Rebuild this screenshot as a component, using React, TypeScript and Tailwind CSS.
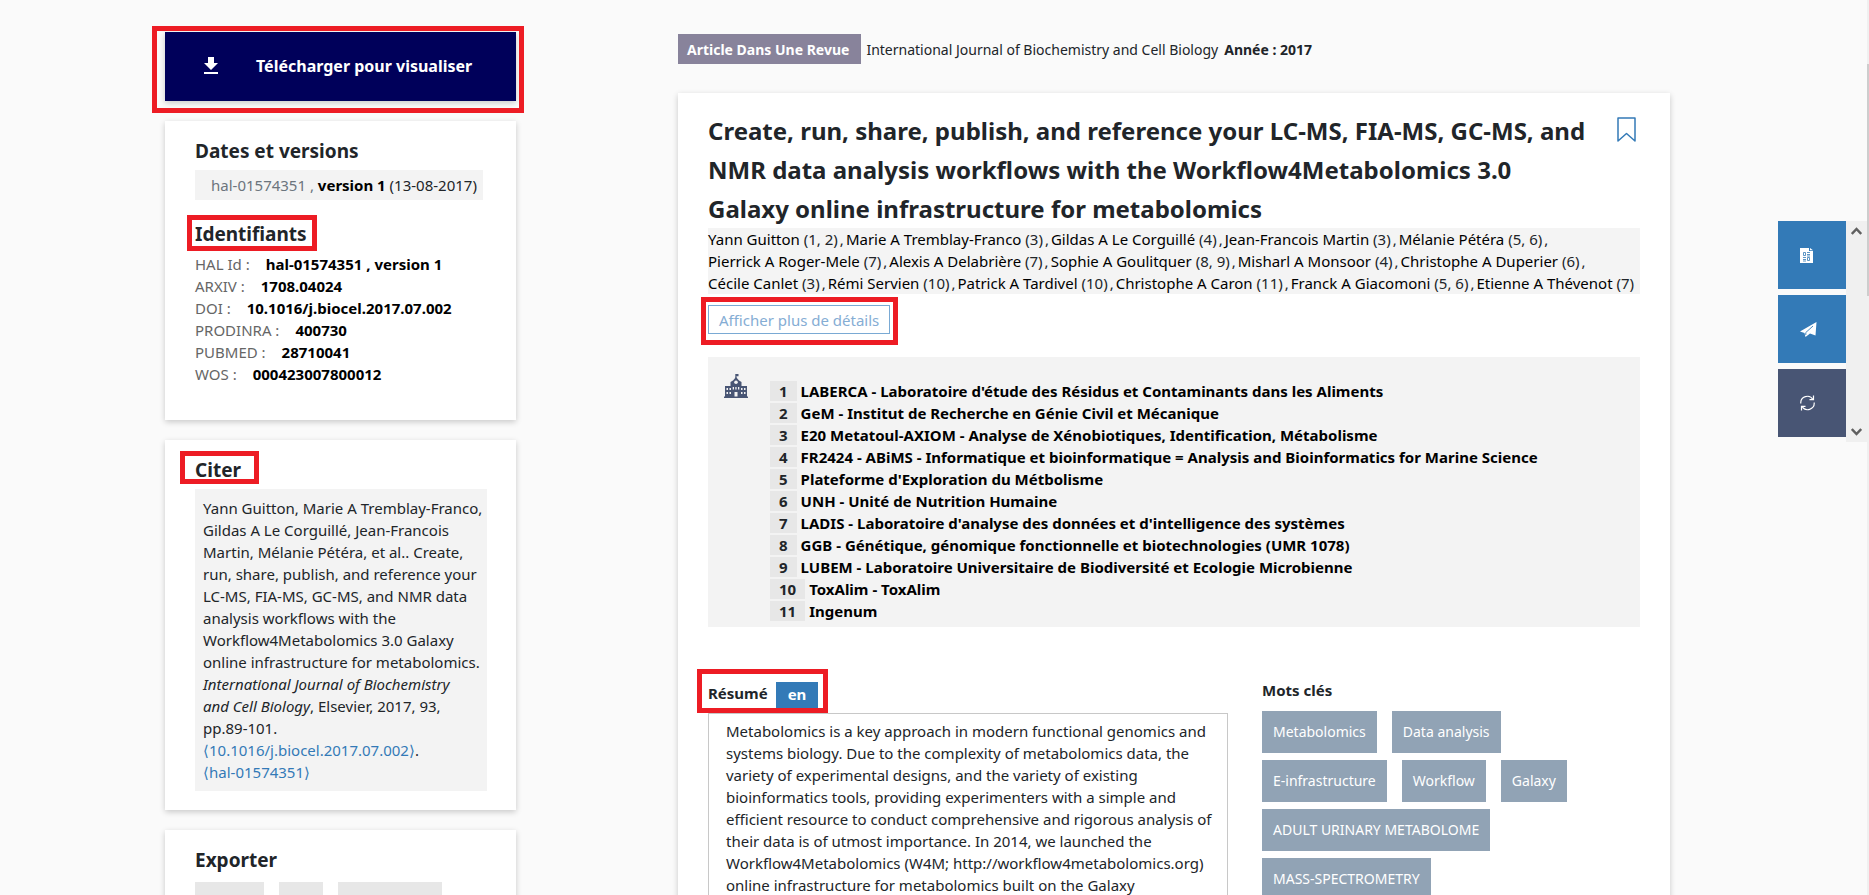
import type { ReactNode } from 'react';
import { MdFileDownload } from 'react-icons/md';

const identifiers = [
  { label: 'HAL Id :', value: 'hal-01574351 , version 1' },
  { label: 'ARXIV :', value: '1708.04024' },
  { label: 'DOI :', value: '10.1016/j.biocel.2017.07.002' },
  { label: 'PRODINRA :', value: '400730' },
  { label: 'PUBMED :', value: '28710041' },
  { label: 'WOS :', value: '000423007800012' },
];

const authors = [
  { name: 'Yann Guitton', refs: '(1, 2)' },
  { name: 'Marie A Tremblay-Franco', refs: '(3)' },
  { name: 'Gildas A Le Corguillé', refs: '(4)' },
  { name: 'Jean-Francois Martin', refs: '(3)' },
  { name: 'Mélanie Pétéra', refs: '(5, 6)' },
  { name: 'Pierrick A Roger-Mele', refs: '(7)' },
  { name: 'Alexis A Delabrière', refs: '(7)' },
  { name: 'Sophie A Goulitquer', refs: '(8, 9)' },
  { name: 'Misharl A Monsoor', refs: '(4)' },
  { name: 'Christophe A Duperier', refs: '(6)' },
  { name: 'Cécile Canlet', refs: '(3)' },
  { name: 'Rémi Servien', refs: '(10)' },
  { name: 'Patrick A Tardivel', refs: '(10)' },
  { name: 'Christophe A Caron', refs: '(11)' },
  { name: 'Franck A Giacomoni', refs: '(5, 6)' },
  { name: 'Etienne A Thévenot', refs: '(7)' },
];

const labs = [
  "LABERCA - Laboratoire d'étude des Résidus et Contaminants dans les Aliments",
  'GeM - Institut de Recherche en Génie Civil et Mécanique',
  'E20 Metatoul-AXIOM - Analyse de Xénobiotiques, Identification, Métabolisme',
  'FR2424 - ABiMS - Informatique et bioinformatique = Analysis and Bioinformatics for Marine Science',
  "Plateforme d'Exploration du Métbolisme",
  'UNH - Unité de Nutrition Humaine',
  "LADIS - Laboratoire d'analyse des données et d'intelligence des systèmes",
  'GGB - Génétique, génomique fonctionnelle et biotechnologies (UMR 1078)',
  'LUBEM - Laboratoire Universitaire de Biodiversité et Ecologie Microbienne',
  'ToxAlim - ToxAlim',
  'Ingenum',
];

const keywords = [
  'Metabolomics',
  'Data analysis',
  'E-infrastructure',
  'Workflow',
  'Galaxy',
  'ADULT URINARY METABOLOME',
  'MASS-SPECTROMETRY',
];

// Red frame drawn over its relative parent
function Highlight({ className }: { className: string }) {
  return <div className={`absolute border-5 border-[#ed1c24] pointer-events-none ${className}`} />;
}

function Card({ children, className = '' }: { children: ReactNode; className?: string }) {
  return (
    <section className={`bg-white px-[30px] shadow-[0_2px_6px_rgba(0,0,0,0.2)] ${className}`}>
      {children}
    </section>
  );
}

function Heading({ children }: { children: ReactNode }) {
  return <h2 className="text-[19px] leading-[30px] font-bold">{children}</h2>;
}

function Sidebar() {
  return (
    <aside className="w-[351px] shrink-0 flex flex-col gap-5 pt-8">
      <div className="relative">
        <button className="w-full h-[69px] pb-0.5 bg-[#00005a] text-white font-bold text-base flex items-center shadow-[0_2px_6px_rgba(0,0,0,0.2)]">
          <MdFileDownload size={24} className="ml-[34px] mr-[33px]" />
          <span>Télécharger pour visualiser</span>
        </button>
        <Highlight className="-left-[13px] -right-2 -top-1.5 -bottom-3" />
      </div>

      <Card className="pt-[15px] pb-[35px]">
        <Heading>Dates et versions</Heading>
        <p className="w-72 mt-1 pl-4 bg-[#f3f3f3] leading-[30px] whitespace-nowrap">
          <span className="text-[#6c757d]">hal-01574351 ,</span>{' '}
          <b className="text-black">version 1</b> (13-08-2017)
        </p>
        <div className="relative w-fit mt-[19px]">
          <Heading>Identifiants</Heading>
          <Highlight className="-left-2 -right-2.5 -top-1 -bottom-0.5" />
        </div>
        <dl className="mt-1">
          {identifiers.map((id) => (
            <div key={id.label} className="flex gap-4">
              <dt className="text-[#666]">{id.label}</dt>
              <dd className="font-bold text-black">{id.value}</dd>
            </div>
          ))}
        </dl>
      </Card>

      <Card className="pt-[15px] pb-[19px]">
        <div className="relative w-fit">
          <Heading>Citer</Heading>
          <Highlight className="-left-[15px] -right-[18px] -top-1 bottom-px" />
        </div>
        <div className="mt-1 w-[292px] pl-2 pr-1 py-2 bg-[#f3f3f3]">
          Yann Guitton, Marie A Tremblay-Franco, Gildas A Le Corguillé, Jean-Francois Martin, Mélanie
          Pétéra, et al.. Create, run, share, publish, and reference your LC-MS, FIA-MS, GC-MS, and NMR
          data analysis workflows with the Workflow4Metabolomics 3.0 Galaxy online infrastructure for
          metabolomics. <i>International Journal of Biochemistry and&nbsp;Cell Biology</i>, Elsevier,
          2017, 93, pp.89-101.{' '}
          <a href="#doi" className="text-[#337ab7] whitespace-nowrap">⟨10.1016/j.biocel.2017.07.002⟩</a>.{' '}
          <a href="#hal" className="text-[#337ab7] whitespace-nowrap">⟨hal-01574351⟩</a>
        </div>
      </Card>

      <Card className="pt-[15px] pb-8">
        <Heading>Exporter</Heading>
        <div className="flex gap-[15px] mt-[7px]">
          <div className="w-[69px] h-8 bg-[#e7e7e7]" />
          <div className="w-11 h-8 bg-[#e7e7e7]" />
          <div className="w-[104px] h-8 bg-[#e7e7e7]" />
        </div>
      </Card>
    </aside>
  );
}

function SchoolIcon() {
  return (
    <svg width="24" height="24" viewBox="0 0 24 24" className="ml-4 mr-[22px] shrink-0" fill="#485574">
      <path d="M11.300 0H14.500V2.200H12.500V4H11.300z" />
      <path d="M0 22.500h24V24H0z" />
      <path d="M1 12h5.500V8L9 6.500 12 3l3 3.500 2.500 1.500v4H23V23H1z" />
      <circle cx="12" cy="8.300" r="1.800" fill="#f3f3f3" />
      <path
        fill="#f3f3f3"
        d="M2.500 14H4v2H2.500zM5.500 14H7v2H5.500zM2.500 18H4v2H2.500zM5.500 18H7v2H5.500zM17 14h1.500v2H17zM20 14h1.500v2H20zM17 18h1.500v2H17zM20 18h1.500v2H20zM8.700 13h1.300v2.500H8.700zM11.300 13h1.300v2.500h-1.300zM14 13h1.300v2.500H14zM10.500 18h3v4.500h-3z"
      />
    </svg>
  );
}

function Affiliations() {
  return (
    <div className="mt-[23px] bg-[#f3f3f3] flex pt-[17px] pb-[5px]">
      <SchoolIcon />
      <ol className="pt-1.5">
        {labs.map((lab, i) => (
          <li key={lab} className="flex items-center gap-1 font-bold">
            <span className="h-5 leading-5 px-[9px] bg-[#e7e7e7]">{i + 1}</span>
            <span className="text-black">{lab}</span>
          </li>
        ))}
      </ol>
    </div>
  );
}

function Abstract() {
  return (
    <div className="w-[520px]">
      <div className="relative w-fit h-[31px] flex">
        <h3 className="font-bold">Résumé</h3>
        <button className="ml-2 h-full px-3 pb-2 bg-[#337ab7] text-white font-bold">en</button>
        <Highlight className="-left-[11px] -right-2.5 -top-[13px] bottom-0" />
      </div>
      <p className="border border-[#c8c8c8] pl-[17px] pr-2 py-1.5">
        Metabolomics is a key approach in modern functional genomics and systems biology. Due to the
        complexity of metabolomics data, the variety of experimental designs, and the variety of
        existing bioinformatics tools, providing experimenters with a simple and efficient resource to
        conduct comprehensive and rigorous analysis of their data is of utmost importance. In 2014, we
        launched the Workflow4Metabolomics (W4M; http://workflow4metabolomics.org) online
        infrastructure for metabolomics built on the Galaxy
      </p>
    </div>
  );
}

function Article() {
  return (
    <main className="flex-1 pt-[34px]">
      <div className="flex items-end mb-[29px] text-sm leading-7">
        <span className="bg-[#88839b] text-white font-bold pl-[9px] pr-3 pt-0.5">
          Article Dans Une Revue
        </span>
        <span className="ml-[5px]">International Journal of Biochemistry and Cell Biology</span>
        <b className="ml-1.5">Année : 2017</b>
      </div>

      <Card className="pt-[18px] pb-10">
        <div className="flex items-start justify-between">
          <h1 className="text-2xl leading-[39px] font-bold">
            Create, run, share, publish, and reference your LC-MS, FIA-MS, GC-MS, and NMR data analysis
            workflows with the Workflow4Metabolomics 3.0 Galaxy online infrastructure for metabolomics
          </h1>
          <button aria-label="Bookmark" className="mt-1.5 mr-1 ml-6 shrink-0">
            <svg width="19" height="25" viewBox="0 0 19 25" fill="none" stroke="#337ab7" strokeWidth="1.500">
              <path d="M1 1h17v23l-8.500-7.500L1 24z" strokeLinejoin="round" />
            </svg>
          </button>
        </div>

        <div className="bg-[#f4f4f4] flex flex-wrap gap-x-0.5">
          {authors.map((a, i) => (
            <span key={a.name} className="whitespace-nowrap">
              <a href="#author" className="text-black">{a.name}</a> {a.refs}
              {i < authors.length - 1 && <span className="ml-0.5">,</span>}
            </span>
          ))}
        </div>

        <div className="relative w-fit mt-[11px]">
          <button className="block h-[29px] px-2.5 border border-[#7aaad4] text-[#85add4]">
            Afficher plus de détails
          </button>
          <Highlight className="-left-[7px] -right-2 -top-2 -bottom-[11px]" />
        </div>

        <Affiliations />

        <div className="flex mt-[55px] gap-[34px] items-start">
          <Abstract />
          <div className="flex-1 -mt-[3px] pr-5">
            <h3 className="font-bold">Mots clés</h3>
            <div className="flex flex-wrap gap-x-[15px] gap-y-[7px] mt-2.5 text-sm leading-[42px]">
              {keywords.map((k) => (
                <a key={k} href="#keyword" className="px-[11px] bg-[#91a3b5] text-white">
                  {k}
                </a>
              ))}
            </div>
          </div>
        </div>
      </Card>
    </main>
  );
}

function SideTools() {
  return (
    <div className="absolute right-0.5 top-[221px] flex">
      <div className="flex flex-col gap-1.5">
        <button aria-label="Document" className="w-[68px] h-[68px] pl-[22px] bg-[#337ab7]">
          <svg width="13" height="15" viewBox="0 0 13 15">
            <path fill="#fff" d="M0 0h9v3h4v12H0z" />
            <path fill="#fff" d="M10 0l3 2.200h-3z" />
            <g fill="none" stroke="#337ab7" strokeOpacity="0.8">
              <path d="M3.500 4.500h2v3h-2zM7.500 9.500h2v3h-2z" />
              <path d="M7 4.500h3M7 6.500h3M7 8h3M3 9.500h3M3 11.500h3M3 13h3" />
            </g>
          </svg>
        </button>
        <button aria-label="Envoyer" className="w-[68px] h-[68px] pl-[22px] bg-[#337ab7]">
          <svg width="17" height="15" viewBox="0 0 17 15">
            <path fill="#fff" d="M0 9.500L16.500 0 15.500 13.500 10 11.500 5.500 15 4.500 11z" />
            <path d="M5.800 13V10.500L13 4" fill="none" stroke="#337ab7" strokeWidth="0.900" />
          </svg>
        </button>
        <button aria-label="Actualiser" className="w-[68px] h-[68px] pl-[22px] bg-[#485574]">
          <svg width="15" height="16" viewBox="0 0 15 16" fill="none" stroke="#fff" strokeWidth="1.200">
            <path d="M.8 8.500A6.600 6.600 0 0 1 13 4.500M14.200 7.500A6.600 6.600 0 0 1 2 11.500" />
            <path d="M13.500 .5V4.600H9.500M1.500 15.500V11.400H5.500" />
          </svg>
        </button>
      </div>
      <div className="w-[21px] h-[221px] bg-[#f0f0f0] flex flex-col justify-between items-center py-1.5">
        <svg width="11" height="8" viewBox="0 0 11 8" fill="none" stroke="#606060" strokeWidth="2.500">
          <path d="M.8 7L5.500 2l4.700 5" />
        </svg>
        <svg width="11" height="8" viewBox="0 0 11 8" fill="none" stroke="#606060" strokeWidth="2.500">
          <path d="M.8 1l4.700 5 4.700-5" />
        </svg>
      </div>
    </div>
  );
}

export default function App() {
  return (
    <div className="relative h-screen overflow-hidden bg-[#fafafa] text-[#212529] text-[15px] leading-[22px] font-['Noto_Sans',sans-serif]">
      <div className="flex gap-[162px] pl-[165px] pr-[199px]">
        <Sidebar />
        <Article />
      </div>
      <SideTools />
      <div className="absolute inset-y-0 right-0 w-0.5 bg-[#f0f0f0] pt-16">
        <div className="h-[232px] bg-[#cdcdcd]" />
      </div>
    </div>
  );
}
